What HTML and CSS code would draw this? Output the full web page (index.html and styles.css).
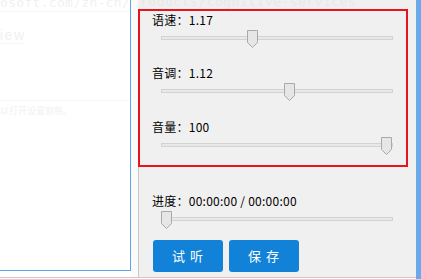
FILE: index.html
```html
<!DOCTYPE html>
<html lang="zh-CN">
<head>
<meta charset="utf-8">
<title>TTS</title>
<link rel="stylesheet" href="styles.css">
</head>
<body>
<div class="app">
  <div class="main">
    <div class="left">
      <div class="ghost-url">osoft.com/zh-cn/</div>
      <div class="ghost-link">iew</div>
      <div class="ghost-note">以打开设置窗格。</div>
    </div>
    <div class="gap"></div>
    <div class="right">
      <div class="ghost-top">roducts/cognitive-services</div>
      <div class="group">
        <div class="row">
          <div class="label">语速：1.17</div>
          <div class="slider">
            <div class="track"></div>
            <svg class="thumb" style="left:86px" width="11" height="18" viewBox="0 0 11 18"><path d="M0.5 0.5H10.5V12.5L5.5 17.5L0.5 12.5Z"/></svg>
          </div>
        </div>
        <div class="row row-2">
          <div class="label">音调：1.12</div>
          <div class="slider">
            <div class="track"></div>
            <svg class="thumb" style="left:123px" width="11" height="18" viewBox="0 0 11 18"><path d="M0.5 0.5H10.5V12.5L5.5 17.5L0.5 12.5Z"/></svg>
          </div>
        </div>
        <div class="row row-3">
          <div class="label">音量：100</div>
          <div class="slider">
            <div class="track"></div>
            <svg class="thumb" style="left:220px" width="11" height="18" viewBox="0 0 11 18"><path d="M0.5 0.5H10.5V12.5L5.5 17.5L0.5 12.5Z"/></svg>
          </div>
        </div>
      </div>
      <div class="lower">
        <div class="row">
          <div class="label">进度：00:00:00 / 00:00:00</div>
          <div class="slider">
            <div class="track"></div>
            <svg class="thumb" style="left:0px" width="11" height="18" viewBox="0 0 11 18"><path d="M0.5 0.5H10.5V12.5L5.5 17.5L0.5 12.5Z"/></svg>
          </div>
        </div>
        <div class="buttons">
          <button class="btn">试 听</button>
          <button class="btn">保 存</button>
        </div>
      </div>
    </div>
  </div>
  <div class="edge"></div>
</div>
</body>
</html>
```

FILE: styles.css
```css
* { box-sizing: border-box; }
html, body { margin: 0; padding: 0; }
body {
  font-family: "Noto Sans CJK SC", "Noto Sans", sans-serif;
  background: #ffffff;
  overflow: hidden;
}
.app {
  display: flex;
  width: 421px;
  height: 279px;
  background: #ffffff;
}
.main {
  display: flex;
  align-items: flex-start;
  width: 416px;
  height: 278px;
  border-bottom: 1px solid #cacaca;
}
.left {
  width: 131px;
  height: 271px;
  background: #ffffff;
  border-right: 1px solid #5da5ec;
  border-bottom: 1px solid #5da5ec;
  overflow: hidden;
}
.ghost-url {
  height: 12px;
  border-bottom: 1px solid #f6f6f6;
  font-family: "DejaVu Sans Mono", monospace;
  font-size: 13px;
  line-height: 6px;
  letter-spacing: 0.3px;
  color: #f1f1f1;
  white-space: nowrap;
  overflow: hidden;
}
.ghost-link {
  width: 24px;
  margin-top: 16px;
  font-family: "Liberation Sans", sans-serif;
  font-size: 14px;
  line-height: 15px;
  letter-spacing: 1.5px;
  color: #f0f0f0;
  border-bottom: 1px solid #f4f4f4;
  white-space: nowrap;
}
.ghost-note {
  margin-top: 56px;
  padding-top: 4px;
  border-top: 1px solid #f7f7f7;
  font-size: 9px;
  line-height: 11px;
  color: #f2f2f2;
  white-space: nowrap;
}
.gap {
  width: 7px;
  align-self: stretch;
  background: #fafafa;
}
.right {
  width: 278px;
  align-self: stretch;
  background: #f0f0f0;
  display: flex;
  flex-direction: column;
}
.ghost-top {
  height: 9px;
  font-family: "DejaVu Sans Mono", monospace;
  font-size: 13px;
  line-height: 4px;
  letter-spacing: 0.5px;
  color: #e8e8e8;
  white-space: nowrap;
  overflow: hidden;
  padding-left: 2px;
}
.group {
  width: 270px;
  height: 158px;
  border: 2px solid #e8131d;
  padding: 1px 0 0 12px;
}
.row {
  display: flex;
  flex-direction: column;
}
.row-2 { margin-top: 17px; }
.row-3 { margin-top: 18px; }
.label {
  font-size: 12px;
  line-height: 16px;
  height: 16px;
  letter-spacing: 0.25px;
  color: #000000;
  white-space: nowrap;
}
.slider {
  position: relative;
  width: 232px;
  height: 18px;
  margin: 2px 0 0 9px;
}
.track {
  margin-top: 6px;
  height: 4px;
  background: #e7e8e7;
  border: 1px solid #d2d4d2;
}
.thumb {
  position: absolute;
  top: 0;
}
.thumb path {
  fill: #e6e6e6;
  stroke: #a9a9a9;
  stroke-width: 1;
}
.lower {
  flex: 1;
  border-left: 1px solid #c8c8c8;
  padding: 26px 0 0 13px;
}
.buttons {
  display: flex;
  gap: 6px;
  margin: 11px 0 0 1px;
}
.btn {
  width: 70px;
  height: 32px;
  border: none;
  border-radius: 3px;
  background: #1282d9;
  color: #ffffff;
  font-family: "Noto Sans CJK SC", sans-serif;
  font-size: 13px;
  letter-spacing: 1px;
  padding: 0;
  line-height: 32px;
}
.edge {
  width: 5px;
  background: #6aa9ee;
}
```
